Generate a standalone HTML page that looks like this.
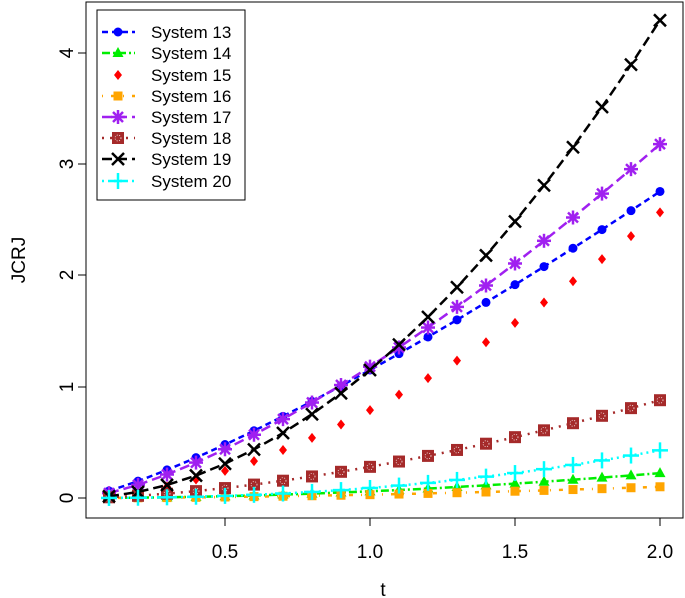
<!DOCTYPE html><html><head><style>body{margin:0;background:#fff}svg{display:block}text{font-family:"Liberation Sans",sans-serif;fill:#000}</style></head><body>
<svg id="s" width="685" height="598" xmlns="http://www.w3.org/2000/svg">
<rect x="86" y="2" width="597" height="516" fill="none" stroke="#000" stroke-width="1"/>
<g stroke="#000"><line x1="225" y1="518" x2="225" y2="526"/><line x1="370" y1="518" x2="370" y2="526"/><line x1="515" y1="518" x2="515" y2="526"/><line x1="660" y1="518" x2="660" y2="526"/>
<line x1="78" y1="498" x2="86" y2="498"/><line x1="78" y1="387" x2="86" y2="387"/><line x1="78" y1="275" x2="86" y2="275"/><line x1="78" y1="164" x2="86" y2="164"/><line x1="78" y1="53" x2="86" y2="53"/></g>
<g font-size="19" text-anchor="middle"><text x="225" y="558">0.5</text><text x="370" y="558">1.0</text><text x="515" y="558">1.5</text><text x="660" y="558">2.0</text><text x="383" y="596">t</text>
<text transform="translate(73,498) rotate(-90)">0</text><text transform="translate(73,387) rotate(-90)">1</text><text transform="translate(73,275) rotate(-90)">2</text><text transform="translate(73,164) rotate(-90)">3</text><text transform="translate(73,53) rotate(-90)">4</text><text transform="translate(25,260) rotate(-90)">JCRJ</text></g>
<rect x="97" y="10" width="148" height="190" fill="#fff" stroke="#000"/>
<g id="g"></g>
</svg>
<script>
var g=document.getElementById('g');
function X(t){return 80+290*t}function Y(v){return 498-111.3*v}
var S=[['#0000ff',1.15,1.26,'6,4','c'],['#00ee00',0.06,1.9,'8,3,2,3','t'],['#ff0000',0.79,1.7,'2,8','d'],['#ffa500',0.03,1.75,'1,8,4,8','s'],['#a020f0',1.18,1.43,'10,5','a'],['#a52a2a',0.28,1.65,'2,6','b'],['#000000',1.15,1.9,'10,5','x'],['#00ffff',0.09,2.25,'2,4','p']];
var h='';
function mk(c,k,x,y){var r='';
if(k=='c')r='<circle cx="'+x+'" cy="'+y+'" r="4.5" fill="'+c+'"/>';
if(k=='t')r='<polygon points="'+x+','+(y-6)+' '+(x-5.5)+','+(y+4)+' '+(x+5.5)+','+(y+4)+'" fill="'+c+'"/>';
if(k=='d')r='<polygon points="'+x+','+(y-5)+' '+(x+4)+','+y+' '+x+','+(y+5)+' '+(x-4)+','+y+'" fill="'+c+'"/>';
if(k=='s')r='<rect x="'+(x-4.5)+'" y="'+(y-4.5)+'" width="9" height="9" fill="'+c+'"/>';
if(k=='a')r='<g stroke="'+c+'" stroke-width="2.5"><line x1="'+(x-7)+'" y1="'+y+'" x2="'+(x+7)+'" y2="'+y+'"/><line x1="'+x+'" y1="'+(y-7)+'" x2="'+x+'" y2="'+(y+7)+'"/><line x1="'+(x-5)+'" y1="'+(y-5)+'" x2="'+(x+5)+'" y2="'+(y+5)+'"/><line x1="'+(x-5)+'" y1="'+(y+5)+'" x2="'+(x+5)+'" y2="'+(y-5)+'"/></g>';
if(k=='b')r='<rect x="'+(x-6)+'" y="'+(y-6)+'" width="12" height="12" fill="'+c+'"/><circle cx="'+x+'" cy="'+y+'" r="3" fill="none" stroke="#fff" stroke-width="0.7" stroke-dasharray="1,1.5"/>';
if(k=='x')r='<g stroke="'+c+'" stroke-width="2.5"><line x1="'+(x-6)+'" y1="'+(y-6)+'" x2="'+(x+6)+'" y2="'+(y+6)+'"/><line x1="'+(x-6)+'" y1="'+(y+6)+'" x2="'+(x+6)+'" y2="'+(y-6)+'"/></g>';
if(k=='p')r='<g stroke="'+c+'" stroke-width="2.5"><line x1="'+(x-8)+'" y1="'+y+'" x2="'+(x+8)+'" y2="'+y+'"/><line x1="'+x+'" y1="'+(y-8)+'" x2="'+x+'" y2="'+(y+8)+'"/></g>';
return r}
S.forEach(function(s,i){var pts=[],m='';
for(var j=1;j<=20;j++){var t=j/10,x=X(t),y=Y(s[1]*Math.pow(t,s[2]));pts.push(x.toFixed(1)+','+y.toFixed(1));m+=mk(s[0],s[4],x,y)}
if(s[4]!='d')h+='<polyline points="'+pts.join(' ')+'" fill="none" stroke="'+s[0]+'" stroke-width="2.5" stroke-dasharray="'+s[3]+'"/>';
h+=m;
var ly=[32,53,75,96,117,138,159,181][i];
if(s[4]!='d')h+='<line x1="102" y1="'+ly+'" x2="135" y2="'+ly+'" stroke="'+s[0]+'" stroke-width="2.5" stroke-dasharray="'+s[3]+'"/>';
h+=mk(s[0],s[4],118,ly)+'<text x="151" y="'+(ly+6)+'" font-size="17">System '+(13+i)+'</text>';
});
g.innerHTML=h;
</script>
</body></html>
